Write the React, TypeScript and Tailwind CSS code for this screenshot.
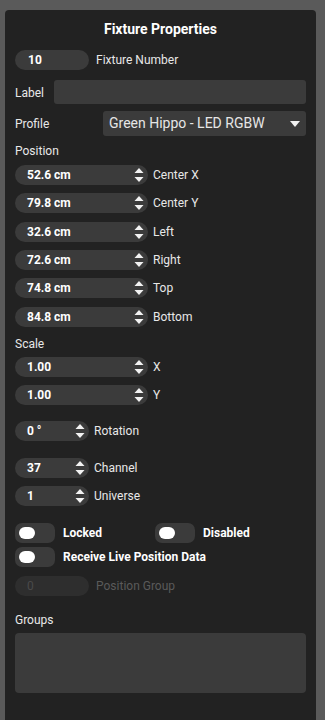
const font = { fontFamily: "Roboto, 'Liberation Sans', sans-serif" };

const Arrows = () => (
  <svg width="12" height="18" viewBox="0 0 12 18" className="shrink-0">
    <path d="M1.5 7 L6 2 L10.5 7 Z" fill="#f2f2f2" />
    <path d="M1.5 11 L6 16 L10.5 11 Z" fill="#f2f2f2" />
  </svg>
);

const Spin = ({ value, label, wide }: { value: string; label: string; wide?: boolean }) => (
  <div className="flex items-center gap-[5px]">
    <div
      className={`h-5 ${wide ? "w-[133px]" : "w-[74px]"} rounded-full bg-[#3b3b3b] flex items-center justify-between pl-3 pr-[3px]`}>
      <span className="text-[12px] font-bold text-white">{value}</span>
      <Arrows />
    </div>
    <span className="text-[12px] text-[#e8e8e8]">{label}</span>
  </div>
);

const Toggle = ({ label }: { label: string }) => (
  <div className="flex items-center gap-2">
    <div className="w-10 h-5 rounded-[7px] bg-[#3b3b3b] flex items-center pl-1">
      <div className="w-4 h-3 rounded-[6px] bg-white" />
    </div>
    <span className="text-[12px] font-bold text-white">{label}</span>
  </div>
);

const App = () => {
  return (
    <div style={font} className="w-[325px] h-[720px] bg-[#5a5a5a] pl-[5px] pr-[9px] pt-[10px] overflow-hidden">
      <div className="h-full bg-[#222222] rounded-t-[4px] px-[10px] flex flex-col">
        <h1 className="mt-[10px] h-[18px] leading-[18px] text-center text-[14px] font-bold text-white">
          Fixture Properties
        </h1>

        <div className="mt-[12px] flex items-center gap-[7px]">
          <div className="h-5 w-[74px] rounded-full bg-[#3b3b3b] flex items-center pl-[13px]">
            <span className="text-[12px] font-bold text-white">10</span>
          </div>
          <span className="text-[12px] text-[#e8e8e8]">Fixture Number</span>
        </div>

        <div className="mt-[10px] flex items-center justify-between h-6">
          <span className="text-[12px] text-[#e8e8e8] pt-[2px]">Label</span>
          <div className="w-[252px] h-6 rounded-[3px] bg-[#3b3b3b]" />
        </div>

        <div className="mt-[7px] flex items-center justify-between h-[25px]">
          <span className="text-[12px] text-[#e8e8e8]">Profile</span>
          <div className="w-[203px] h-[25px] rounded-[3px] bg-[#3b3b3b] flex items-center justify-between pl-[6px] pr-[6px]">
            <span className="text-[14px] text-[#e6e6e6]">Green Hippo - LED RGBW</span>
            <svg width="10" height="6" viewBox="0 0 10 6">
              <path d="M0 0 L10 0 L5 6 Z" fill="#f2f2f2" />
            </svg>
          </div>
        </div>

        <div className="mt-[7px] h-[16px] leading-[16px] text-[12px] text-[#e8e8e8]">Position</div>
        <div className="mt-[6px] flex flex-col gap-[8.33px]">
          <Spin wide value="52.6 cm" label="Center X" />
          <Spin wide value="79.8 cm" label="Center Y" />
          <Spin wide value="32.6 cm" label="Left" />
          <Spin wide value="72.6 cm" label="Right" />
          <Spin wide value="74.8 cm" label="Top" />
          <Spin wide value="84.8 cm" label="Bottom" />
        </div>

        <div className="mt-[9px] h-[16px] leading-[16px] text-[12px] text-[#e8e8e8]">Scale</div>
        <div className="mt-[5px] flex flex-col gap-[8.33px]">
          <Spin wide value="1.00" label="X" />
          <Spin wide value="1.00" label="Y" />
        </div>

        <div className="mt-[16px]">
          <Spin value="0 °" label="Rotation" />
        </div>

        <div className="mt-[17px] flex flex-col gap-[8.33px]">
          <Spin value="37" label="Channel" />
          <Spin value="1" label="Universe" />
        </div>

        <div className="mt-[17px] flex flex-col gap-1">
          <div className="flex">
            <div className="w-[140px]">
              <Toggle label="Locked" />
            </div>
            <Toggle label="Disabled" />
          </div>
          <Toggle label="Receive Live Position Data" />
        </div>

        <div className="mt-[9px] flex items-center gap-[7px]">
          <div className="h-5 w-[74px] rounded-full bg-[#2e2e2e] flex items-center pl-[12px]">
            <span className="text-[12px] text-[#4a4a4a]">0</span>
          </div>
          <span className="text-[12px] text-[#5a5a5a]">Position Group</span>
        </div>

        <div className="mt-[16px] h-[16px] leading-[16px] text-[12px] text-[#e8e8e8]">Groups</div>
        <div className="mt-[5px] h-[60px] rounded-[4px] bg-[#3b3b3b]" />
      </div>
    </div>
  );
};

export default App;
